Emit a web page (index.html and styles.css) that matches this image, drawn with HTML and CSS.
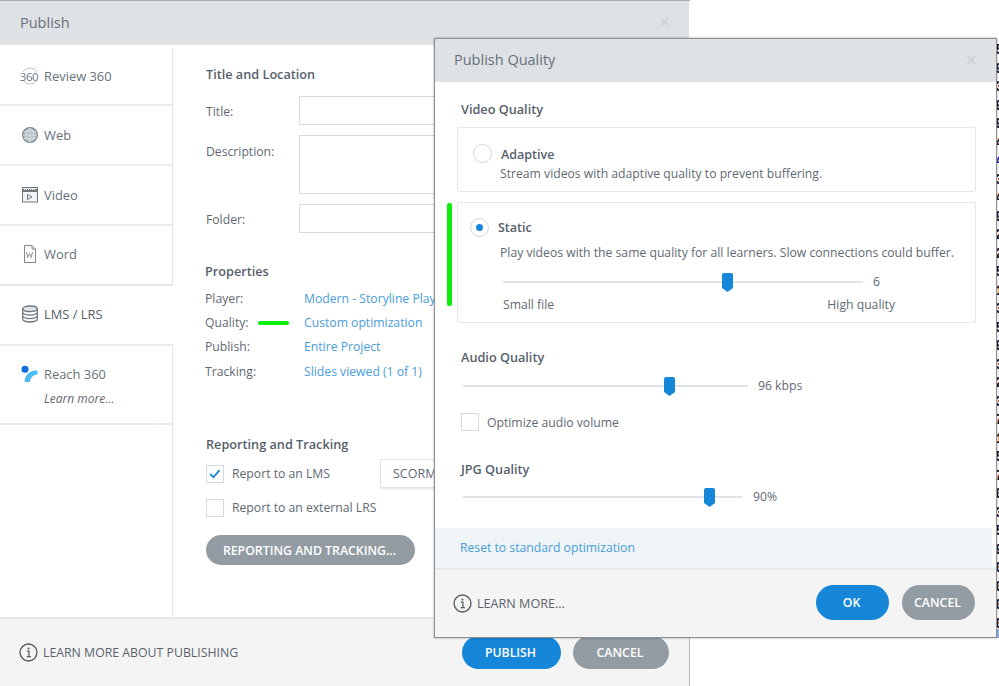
FILE: index.html
```html
<!DOCTYPE html>
<html lang="en">
<head>
<meta charset="utf-8">
<title>Publish Quality</title>
<link rel="stylesheet" href="styles.css">
</head>
<body>
<section class="window publish">
  <header class="win-head"><h1 class="win-title">Publish</h1><span class="close close-back">×</span></header>
  <div class="publish-body">
    <nav class="side">
      <div class="side-item s1"><svg class="ico" viewBox="0 0 18 18"><circle cx="9" cy="9" r="8" fill="none" stroke="#b9c6cc"/><rect x="0" y="5" width="18" height="8" fill="#fff"/></svg><span class="ico-txt">360</span><span>Review 360</span></div>
      <div class="side-item s2"><svg class="ico" viewBox="0 0 18 18"><circle cx="9" cy="9" r="7.400" fill="#b4bfc6" stroke="#7d878e" stroke-width="1.200"/><path d="M9 2v14M2 9h14M3 5.500h12M3 12.500h12M9 2c-5 4-5 10 0 14M9 2c5 4 5 10 0 14" fill="none" stroke="#dfe5e8" stroke-width=".7"/></svg><span>Web</span></div>
      <div class="side-item s3"><svg class="ico" viewBox="0 0 18 18"><rect x="1.500" y="1.500" width="15" height="14.500" fill="#f2f3f4" stroke="#70787e"/><path d="M2 4.500h14" stroke="#70787e" stroke-width="3"/><path d="M3 3.500h12" stroke="#fff" stroke-dasharray="1 1"/><path d="M6.500 8.500v5l4.500-2.500z" fill="none" stroke="#70787e"/></svg><span>Video</span></div>
      <div class="side-item s4"><svg class="ico" viewBox="0 0 18 18"><path d="M3.500 .5h7.500l3.500 3.500v13.500h-11z" fill="#fff" stroke="#80888e"/><path d="M11 .5v3.500h3.500" fill="none" stroke="#80888e"/><path d="M5.500 7l1.200 5.500 1.800-4 1.800 4 1.200-5.500" fill="none" stroke="#80888e" stroke-width=".9"/></svg><span>Word</span></div>
      <div class="side-item s5 active"><svg class="ico" viewBox="0 0 18 18"><ellipse cx="9" cy="3.800" rx="7.300" ry="2.800" fill="#dfe4e7" stroke="#6f787e" stroke-width="1.300"/><path d="M1.700 3.800v10.400c0 1.500 3.300 2.800 7.300 2.800s7.300-1.300 7.300-2.800V3.800M1.700 7.300c0 1.500 3.300 2.800 7.300 2.800s7.300-1.300 7.300-2.800M1.700 10.800c0 1.500 3.300 2.800 7.300 2.800s7.300-1.300 7.300-2.800" fill="none" stroke="#6f787e" stroke-width="1.300"/></svg><span>LMS / LRS</span></div>
      <div class="side-item s6"><div class="reach-line"><svg class="ico" viewBox="0 0 18 18"><path d="M3.500 17C3.500 10 9 5 16.500 5.500L16.500 9.500C12 10 9 13 9 17Z" fill="#4dbcf5"/><circle cx="4" cy="4.200" r="3.500" fill="#0a6fd6"/></svg><span>Reach 360</span></div><em class="learn">Learn more...</em></div>
    </nav>
    <main class="publish-main">
      <h2 class="h-title">Title and Location</h2>
      <div class="form-row r-title"><label>Title:</label><div class="field f-short"></div></div>
      <div class="form-row r-desc"><label>Description:</label><div class="field f-tall"></div></div>
      <div class="form-row r-folder"><label>Folder:</label><div class="field f-short"></div></div>
      <h2 class="h-props">Properties</h2>
      <dl class="props">
        <div class="prop"><dt>Player:</dt><dd>Modern - Storyline Player</dd></div>
        <div class="prop"><dt>Quality:</dt><dd>Custom optimization</dd></div>
        <div class="prop"><dt>Publish:</dt><dd>Entire Project</dd></div>
        <div class="prop"><dt>Tracking:</dt><dd>Slides viewed (1 of 1)</dd></div>
      </dl>
      <h2 class="h-report">Reporting and Tracking</h2>
      <div class="check-row c-lms"><span class="check"><svg viewBox="0 0 18 18"><path d="M3.500 9l3.700 3.700 7-8" fill="none" stroke="#1586d8" stroke-width="2"/></svg></span><span class="lms-label">Report to an LMS</span><div class="scorm">SCORM 2004</div></div>
      <div class="check-row c-lrs"><span class="check"></span><span>Report to an external LRS</span></div>
      <button class="btn gray rt-btn">REPORTING AND TRACKING...</button>
    </main>
  </div>
  <footer class="win-foot back-foot">
    <div class="info"><svg class="info-ico" viewBox="0 0 18 18"><circle cx="9" cy="9" r="8" fill="none" stroke="#555e64" stroke-width="1.300"/><circle cx="9" cy="5.200" r="1" fill="#555e64"/><path d="M7.500 7.800H9.400V12.800M7.300 13h4" fill="none" stroke="#555e64" stroke-width="1.200"/></svg><span>LEARN MORE ABOUT PUBLISHING</span></div>
    <div class="btns"><button class="btn blue b-publish">PUBLISH</button><button class="btn gray b-cancel">CANCEL</button></div>
  </footer>
</section>

<span class="mark mark-h"></span>

<div class="digits">
  <span>5</span><span>9</span><span>3</span><span>9</span><span>9</span><span>4</span><span class="d-blue">4</span><span>3</span><span>4</span><span>9</span><span>2</span><span>2</span><span>5</span><span>1</span><span>3</span><span>5</span><span>9</span><span>3</span><span>2</span><span>3</span><span>7</span><span>1</span><span>5</span><span>7</span><span>0</span><span>3</span><span>5</span><span>9</span><span>0</span><span>0</span><span>0</span><span>0</span>
</div>
<span class="corner"></span>

<section class="window quality">
  <header class="win-head q-head"><h1 class="win-title">Publish Quality</h1><span class="close">×</span></header>
  <div class="q-body">
    <h2 class="q-h q-h1">Video Quality</h2>
    <div class="card card-a">
      <div class="opt"><span class="radio"></span><strong>Adaptive</strong></div>
      <p class="desc">Stream videos with adaptive quality to prevent buffering.</p>
    </div>
    <div class="card card-s">
      <div class="opt"><span class="radio on"></span><strong>Static</strong></div>
      <p class="desc">Play videos with the same quality for all learners. Slow connections could buffer.</p>
      <div class="slider s-video"><div class="track"><svg class="thumb" style="left:62.300%" viewBox="0 0 11 19"><path d="M2 0h7a2 2 0 0 1 2 2v13l-5.500 4-5.500-4V2a2 2 0 0 1 2-2z" fill="#1586d8"/></svg></div><span class="val">6</span></div>
      <div class="ends"><span>Small file</span><span class="hq">High quality</span></div>
    </div>
    <h2 class="q-h q-h2">Audio Quality</h2>
    <div class="slider s-audio"><div class="track"><svg class="thumb" style="left:72.600%" viewBox="0 0 11 19"><path d="M2 0h7a2 2 0 0 1 2 2v13l-5.500 4-5.500-4V2a2 2 0 0 1 2-2z" fill="#1586d8"/></svg></div><span class="val">96 kbps</span></div>
    <div class="check-row c-opt"><span class="check"></span><span>Optimize audio volume</span></div>
    <h2 class="q-h q-h3">JPG Quality</h2>
    <div class="slider s-jpg"><div class="track"><svg class="thumb" style="left:87.900%" viewBox="0 0 11 19"><path d="M2 0h7a2 2 0 0 1 2 2v13l-5.500 4-5.500-4V2a2 2 0 0 1 2-2z" fill="#1586d8"/></svg></div><span class="val">90%</span></div>
  </div>
  <div class="reset"><a class="link">Reset to standard optimization</a></div>
  <footer class="win-foot q-foot">
    <div class="info"><svg class="info-ico" viewBox="0 0 18 18"><circle cx="9" cy="9" r="8" fill="none" stroke="#555e64" stroke-width="1.300"/><circle cx="9" cy="5.200" r="1" fill="#555e64"/><path d="M7.500 7.800H9.400V12.800M7.300 13h4" fill="none" stroke="#555e64" stroke-width="1.200"/></svg><span class="lm">LEARN MORE...</span></div>
    <div class="btns q-btns"><button class="btn blue b-ok">OK</button><button class="btn gray b-qc">CANCEL</button></div>
  </footer>
</section>
<span class="mark mark-v"></span>
</body>
</html>
```
FILE: styles.css
```css
* { box-sizing: border-box; }
html, body { margin: 0; padding: 0; width: 999px; height: 686px; overflow: hidden; background: #fff; }
body { font-family: "Open Sans", sans-serif; font-size: 12.200px; color: #5f6973; position: relative; }
h1, h2, p, dl, dd { margin: 0; }
.window { position: absolute; background: #fff; display: flex; flex-direction: column; }
.publish { left: 0; top: 0; width: 690px; height: 686px; border-top: 1px solid #a9a9a9; }
.quality { left: 434px; top: 38px; width: 563px; height: 600px; border: 1px solid #8f8f8f; box-shadow: 0 0 2px rgba(0,0,0,.35); z-index: 2; }
.win-head { background: #dee2e5; height: 44px; flex: none; display: flex; align-items: center; justify-content: space-between; padding: 0 19px 2px 20px; margin-right: 1px; }
.q-head { height: 43px; margin-right: 0; padding-left: 19px; }
.win-title { font-size: 14.500px; font-weight: 400; color: #66717b; }
.close { font-size: 20px; color: #cfd3d6; font-weight: 600; line-height: 1; }
.publish-body { flex: 1; display: flex; min-height: 0; padding-top: 3px; }
.side { width: 173px; flex: none; border-right: 1px solid #e2e7eb; }
.side-item { display: flex; align-items: center; gap: 5px; border-bottom: 2px solid #e9edf0; padding: 0 0 0 21px; font-size: 12.900px; position: relative; color: #66717b; }
.s1 { height: 58px; }
.s2 { height: 60px; }
.s3 { height: 60px; }
.s4 { height: 60px; border-bottom-color: #e2e7eb; padding-bottom: 2px; }
.s5 { height: 60px; width: 173px; color: #525c66; background: #fff; margin-right: -1px; font-weight: 500; padding-bottom: 2px; }
.s6 { height: 79px; display: block; padding: 19px 0 0 21px; }
.reach-line { display: flex; align-items: center; gap: 5px; }
.learn { display: block; font-size: 12px; margin: 7px 0 0 23px; color: #5f6973; }
.ico { width: 18px; height: 18px; flex: none; }
.ico-txt { position: absolute; left: 19px; width: 20px; text-align: center; font-size: 11.500px; letter-spacing: -.4px; color: #6d777f; }
.publish-main { flex: 1; padding: 18px 0 0 33px; position: relative; min-width: 0; }
.h-title, .h-props, .h-report, .q-h { font-size: 12.700px; font-weight: 600; color: #56606a; line-height: 17px; }
.form-row { display: flex; color: #5f6973; }
.form-row label { width: 93px; flex: none; line-height: 17px; }
.r-title { margin-top: 13px; height: 29px; align-items: center; }
.r-title label, .r-folder label { padding-top: 2px; }
.r-desc { margin-top: 10px; height: 59px; padding-top: 8px; }
.r-desc .field { margin-top: -8px; }
.r-folder { margin-top: 10px; height: 29px; align-items: center; }
.field { border: 1px solid #d5dbdf; flex: 1; background: #fff; }
.f-short { height: 29px; }
.f-tall { height: 59px; }
.h-props { margin: 30px 0 0 -1px; }
.props { margin: 6px 0 0 -1px; }
.prop { display: flex; height: 24.400px; align-items: center; white-space: nowrap; }
.prop dt { width: 99px; }
.prop dd { color: #4a9ddb; }
.h-report { margin-top: 52px; }
.check-row { display: flex; align-items: center; gap: 8px; color: #5f6973; white-space: nowrap; }
.check { width: 18px; height: 18px; border: 1px solid #d3dae0; flex: none; background: #fff; display: block; }
.check svg { display: block; width: 16px; height: 16px; }
.c-lms { margin-top: 6px; height: 30px; }
.lms-label { width: 140px; }
.scorm { width: 120px; height: 29px; border: 1px solid #dfe4e8; border-right: 0; line-height: 27px; padding-left: 12px; box-shadow: 1px 1px 2px rgba(0,0,0,.12); font-size: 12.500px; }
.c-lrs { margin-top: 10px; height: 18px; }
.btn { border: 0; border-radius: 18px; color: #fff; font-family: "Open Sans", sans-serif; font-size: 12.300px; font-weight: 600; padding: 0 2px 0 0; display: block; }
.btn.blue { background: #1586d8; }
.btn.gray { background: #939ca3; }
.rt-btn { margin-top: 18px; width: 209px; height: 30px; padding-top: 1px; }
.win-foot { background: #f4f4f4; display: flex; align-items: center; justify-content: space-between; flex: none; }
.back-foot { height: 69px; border-top: 2px solid #e6e9eb; border-right: 1px solid #b9b9b9; padding: 0 20px 0 19px; }
.info { display: flex; align-items: center; gap: 5px; font-size: 12.300px; color: #5a636b; }
.lm { font-size: 12.600px; }
.info-ico { width: 19px; height: 19px; flex: none; }
.btns { display: flex; gap: 12px; }
.back-foot .btns { margin-top: -1px; }
.b-publish { width: 99px; height: 33px; }
.b-cancel { width: 96px; height: 33px; }
.q-body { flex: 1; padding: 0 0 0 22px; min-height: 0; }
.q-h1 { margin-top: 19px; margin-left: 4px; }
.q-h2 { margin: 26px 0 0 4px; }
.q-h3 { margin: 30px 0 0 4px; }
.card { width: 519px; margin-left: 0; border: 1px solid #e4e8eb; border-radius: 2px; }
.card-a { margin-top: 9px; height: 65px; padding: 17px 0 0 42px; position: relative; }
.card-s { margin-top: 10px; height: 121px; padding: 15px 0 0 42px; position: relative; }
.opt { display: flex; align-items: center; height: 18px; }
.opt strong { font-weight: 600; color: #56606a; font-size: 12.500px; }
.radio { position: absolute; width: 19px; height: 19px; border-radius: 50%; border: 1px solid #cfd7dc; background: #fff; left: 15px; top: 16px; }
.card-s .radio { left: 12px; top: 15px; }
.radio.on::after { content: ""; position: absolute; left: 5px; top: 5px; width: 7px; height: 7px; border-radius: 50%; background: #1586d8; }
.card-a .opt { padding-left: 1px; }
.card-s .opt { margin-left: -2px; }
.desc { margin-top: 2px; line-height: 17px; white-space: nowrap; }
.card-s .desc { margin-top: 8px; }
.slider { display: flex; align-items: center; height: 19px; white-space: nowrap; }
.track { height: 2px; background: #dfe4e8; position: relative; flex: none; }
.thumb { position: absolute; top: -8px; width: 11px; height: 19px; margin-left: -5.500px; display: block; }
.val { margin-left: 10px; }
.s-video { margin: 11px 0 0 3px; }
.s-video .track { width: 360px; }
.ends { display: flex; margin: 5px 0 0 3px; width: 392px; justify-content: space-between; line-height: 17px; }
.s-audio { margin: 10px 0 0 6px; }
.s-audio .track { width: 285px; }
.s-jpg { margin: 9px 0 0 6px; }
.s-jpg .track { width: 280px; }
.c-opt { margin: 18px 0 0 4px; height: 18px; }
.reset { height: 40px; flex: none; background: #eff4f6; margin: 0 4px 0 0; padding-left: 25px; line-height: 40px; }
.link { color: #4a9ddb; }
.q-foot { height: 69px; border-top: 2px solid #e6e9eb; padding: 0 20px 0 18px; }
.q-btns { gap: 13px; margin-top: -2px; margin-right: 1px; }
.b-ok, .b-qc { width: 73px; height: 35px; }
.mark { position: absolute; background: #0bf00b; border-radius: 2px; z-index: 3; }
.mark-h { left: 258px; top: 321px; width: 31px; height: 4px; }
.mark-v { left: 447px; top: 203px; width: 5px; height: 103px; }
.digits { position: absolute; left: 997px; top: 41px; width: 2px; height: 590px; overflow: hidden; display: flex; flex-direction: column; font-family: "Liberation Mono", monospace; font-size: 14px; font-weight: 700; line-height: 18.500px; color: #1a1a3a; text-shadow: .6px 0 #e89020; }
.digits span { margin-left: -2px; }
.d-blue { color: #1a1ae6; }
.corner { position: absolute; left: 997px; top: 629px; width: 2px; height: 9px; background: #8fb4e8; }
```
